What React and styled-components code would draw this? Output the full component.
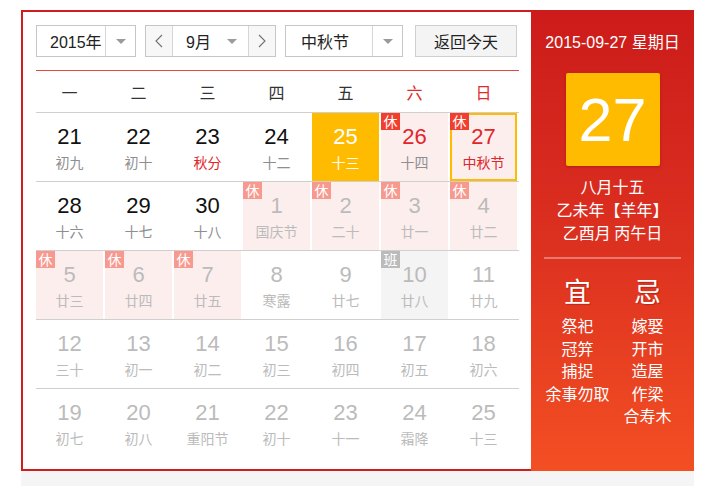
import React from "react";
import styled, { createGlobalStyle, css } from "styled-components";

const Global = createGlobalStyle`
  html, body { margin: 0; padding: 0; background: #fff; }
  body { font-family: "Liberation Sans", "Noto Sans CJK SC", sans-serif; }
  * { box-sizing: border-box; }
`;

const Page = styled.div`
  padding: 10px 0 0 21px;
`;

const Calendar = styled.div`
  display: flex;
  width: 673px;
`;

const Main = styled.div`
  width: 510px;
  border: 2px solid #cd1e1c;
  border-right: none;
  padding: 13px 12px 12px 13px;
`;

const Toolbar = styled.div`
  display: flex;
  align-items: center;
  height: 32px;
`;

const SelectBox = styled.div`
  display: flex;
  height: 32px;
  width: ${(p) => p.$w}px;
  margin-right: ${(p) => p.$mr || 0}px;
  border: 1px solid #c6c6c6;
  background: #fff;
  font-size: 16px;
  color: #222;
`;

const SelectText = styled.div`
  flex: 1;
  display: flex;
  align-items: center;
  padding-left: ${(p) => p.$pl || 13}px;
`;

const ArrowCell = styled.div`
  width: 30px;
  display: flex;
  align-items: center;
  justify-content: center;
  ${(p) => p.$divider && css`border-left: 1px solid #d6d6d6;`}
`;

const Caret = styled.span`
  width: 0;
  height: 0;
  border-left: 5px solid transparent;
  border-right: 5px solid transparent;
  border-top: 5px solid #9a9a9a;
`;

const MonthGroup = styled.div`
  display: flex;
  height: 32px;
  width: 131px;
  margin-right: 9px;
  border: 1px solid #c6c6c6;
`;

const NavBtn = styled.div`
  width: 27px;
  display: flex;
  align-items: center;
  justify-content: center;
  background: #f7f7f7;
  ${(p) => p.$left && css`border-right: 1px solid #d6d6d6;`}
  ${(p) => p.$right && css`border-left: 1px solid #d6d6d6;`}
`;

const MonthSelect = styled.div`
  flex: 1;
  display: flex;
  align-items: center;
  justify-content: space-between;
  padding: 0 11px 0 13px;
  background: #fff;
  font-size: 16px;
  color: #222;
`;

const TodayBtn = styled.div`
  width: 102px;
  height: 32px;
  margin-left: 3px;
  border: 1px solid #cfcfcf;
  background: #f4f4f4;
  display: flex;
  align-items: center;
  justify-content: center;
  font-size: 16px;
  color: #222;
`;

const RedLine = styled.div`
  height: 1px;
  margin-top: 13px;
  background: #e5483c;
`;

const WeekHead = styled.div`
  display: grid;
  grid-template-columns: repeat(7, 69px);
  height: 41px;
  align-items: center;
`;

const WeekName = styled.div`
  text-align: center;
  padding-right: 2px;
  font-size: 16px;
  color: ${(p) => (p.$red ? "#e02b2b" : "#333")};
`;

const Week = styled.div`
  display: grid;
  grid-template-columns: repeat(7, 69px);
  height: 69px;
  border-top: 1px solid #cfcfcf;
`;

const Cell = styled.div`
  position: relative;
  width: 67px;
  height: 68px;
  padding-top: 12px;
  text-align: center;
  background: ${(p) =>
    p.$today ? "#ffbb00" : p.$rest ? "#fdeeee" : p.$work ? "#f4f4f4" : "transparent"};
  ${(p) => p.$selected && css`box-shadow: inset 0 0 0 2px #ffbb00;`}
`;

const DayNum = styled.div`
  font-family: "Liberation Sans", Arial, sans-serif;
  font-size: 22px;
  line-height: 24px;
  color: ${(p) => p.$color};
`;

const Lunar = styled.div`
  margin-top: 3px;
  font-size: 14px;
  line-height: 20px;
  font-family: "Noto Sans CJK SC", sans-serif;
  color: ${(p) => p.$color};
`;

const Tag = styled.span`
  position: absolute;
  top: 0;
  left: 0;
  width: 19px;
  height: 17px;
  line-height: 17px;
  text-align: center;
  font-size: 14px;
  font-family: "Noto Sans CJK SC", sans-serif;
  color: #fff;
  background: ${(p) => p.$bg};
`;

const Side = styled.div`
  width: 163px;
  background: linear-gradient(180deg, #cc1b1a 0%, #dc3020 50%, #f34f23 100%);
  color: #fff;
  text-align: center;
  padding-top: 22px;
  display: flex;
  flex-direction: column;
  align-items: center;
`;

const SideDate = styled.div`
  font-size: 16px;
  line-height: 22px;
`;

const BigDay = styled.div`
  margin-top: 19px;
  width: 94px;
  height: 93px;
  border-radius: 2px;
  background: #ffbb00;
  box-shadow: 0 1px 3px rgba(120, 0, 0, 0.35);
  display: flex;
  align-items: center;
  justify-content: center;
  font-family: "Liberation Sans", Arial, sans-serif;
  font-size: 61px;
  color: #fff;
`;

const LunarInfo = styled.div`
  margin-top: 9px;
  font-size: 16px;
  line-height: 23px;
  font-family: "Noto Sans CJK SC", sans-serif;
`;

const SideLine = styled.div`
  margin-top: 13px;
  width: 137px;
  height: 2px;
  background: rgba(255, 255, 255, 0.35);
`;

const Advice = styled.div`
  margin-top: 16px;
  display: flex;
  justify-content: center;
`;

const AdviceCol = styled.div`
  width: 70px;
  display: flex;
  flex-direction: column;
  align-items: center;
  font-family: "Noto Sans CJK SC", sans-serif;
`;

const AdviceHead = styled.div`
  font-size: 27px;
  line-height: 32px;
  margin-bottom: 7px;
  text-shadow: 1px 1px 1px rgba(110, 0, 0, 0.35);
`;

const AdviceItem = styled.div`
  font-size: 16px;
  line-height: 22.5px;
  white-space: nowrap;
`;

const Below = styled.div`
  width: 673px;
  height: 20px;
  background: #f5f5f5;
`;

const Chevron = ({ dir }) => (
  <svg width="8" height="14" viewBox="0 0 8 14">
    <polyline
      points={dir === "left" ? "7,1 1,7 7,13" : "1,1 7,7 1,13"}
      fill="none"
      stroke="#707070"
      strokeWidth="1.1"
    />
  </svg>
);

const weekNames = ["一", "二", "三", "四", "五", "六", "日"];

// f: faded (other month); r: rest day; w: work day; t: today; s: selected; rn: red number; rl: red lunar
const weeks = [
  [
    { d: 21, l: "初九" },
    { d: 22, l: "初十" },
    { d: 23, l: "秋分", rl: 1 },
    { d: 24, l: "十二" },
    { d: 25, l: "十三", t: 1 },
    { d: 26, l: "十四", r: 1, rn: 1 },
    { d: 27, l: "中秋节", r: 1, s: 1, rn: 1, rl: 1 },
  ],
  [
    { d: 28, l: "十六" },
    { d: 29, l: "十七" },
    { d: 30, l: "十八" },
    { d: 1, l: "国庆节", f: 1, r: 1 },
    { d: 2, l: "二十", f: 1, r: 1 },
    { d: 3, l: "廿一", f: 1, r: 1 },
    { d: 4, l: "廿二", f: 1, r: 1 },
  ],
  [
    { d: 5, l: "廿三", f: 1, r: 1 },
    { d: 6, l: "廿四", f: 1, r: 1 },
    { d: 7, l: "廿五", f: 1, r: 1 },
    { d: 8, l: "寒露", f: 1 },
    { d: 9, l: "廿七", f: 1 },
    { d: 10, l: "廿八", f: 1, w: 1 },
    { d: 11, l: "廿九", f: 1 },
  ],
  [
    { d: 12, l: "三十", f: 1 },
    { d: 13, l: "初一", f: 1 },
    { d: 14, l: "初二", f: 1 },
    { d: 15, l: "初三", f: 1 },
    { d: 16, l: "初四", f: 1 },
    { d: 17, l: "初五", f: 1 },
    { d: 18, l: "初六", f: 1 },
  ],
  [
    { d: 19, l: "初七", f: 1 },
    { d: 20, l: "初八", f: 1 },
    { d: 21, l: "重阳节", f: 1 },
    { d: 22, l: "初十", f: 1 },
    { d: 23, l: "十一", f: 1 },
    { d: 24, l: "霜降", f: 1 },
    { d: 25, l: "十三", f: 1 },
  ],
];

const yi = ["祭祀", "冠笄", "捕捉", "余事勿取"];
const ji = ["嫁娶", "开市", "造屋", "作梁", "合寿木"];

function DayCell({ c }) {
  const numColor = c.t ? "#fff" : c.f ? "#bbbbbb" : c.rn ? "#e0262b" : "#111";
  const lunarColor = c.t ? "#fff" : c.f ? "#bbbbbb" : c.rl ? "#e0262b" : "#8e8e8e";
  return (
    <Cell $today={c.t} $rest={c.r} $work={c.w} $selected={c.s}>
      {c.r && <Tag $bg={c.f ? "#f8998f" : "#f23e2e"}>休</Tag>}
      {c.w && <Tag $bg="#bbbbbb">班</Tag>}
      <DayNum $color={numColor}>{c.d}</DayNum>
      <Lunar $color={lunarColor}>{c.l}</Lunar>
    </Cell>
  );
}

export default function App() {
  return (
    <>
      <Global />
      <Page>
        <Calendar>
          <Main>
            <Toolbar>
              <SelectBox $w={100} $mr={9}>
                <SelectText>2015年</SelectText>
                <ArrowCell $divider>
                  <Caret />
                </ArrowCell>
              </SelectBox>
              <MonthGroup>
                <NavBtn $left>
                  <Chevron dir="left" />
                </NavBtn>
                <MonthSelect>
                  <span>9月</span>
                  <Caret />
                </MonthSelect>
                <NavBtn $right>
                  <Chevron dir="right" />
                </NavBtn>
              </MonthGroup>
              <SelectBox $w={118} $mr={9}>
                <SelectText $pl={15}>中秋节</SelectText>
                <ArrowCell $divider>
                  <Caret />
                </ArrowCell>
              </SelectBox>
              <TodayBtn>返回今天</TodayBtn>
            </Toolbar>
            <RedLine />
            <WeekHead>
              {weekNames.map((n, i) => (
                <WeekName key={n} $red={i >= 5}>
                  {n}
                </WeekName>
              ))}
            </WeekHead>
            {weeks.map((w, i) => (
              <Week key={i}>
                {w.map((c, j) => (
                  <DayCell key={j} c={c} />
                ))}
              </Week>
            ))}
          </Main>
          <Side>
            <SideDate>2015-09-27 星期日</SideDate>
            <BigDay>27</BigDay>
            <LunarInfo>
              <div>八月十五</div>
              <div>乙未年【羊年】</div>
              <div>乙酉月 丙午日</div>
            </LunarInfo>
            <SideLine />
            <Advice>
              <AdviceCol>
                <AdviceHead>宜</AdviceHead>
                {yi.map((t) => (
                  <AdviceItem key={t}>{t}</AdviceItem>
                ))}
              </AdviceCol>
              <AdviceCol>
                <AdviceHead>忌</AdviceHead>
                {ji.map((t) => (
                  <AdviceItem key={t}>{t}</AdviceItem>
                ))}
              </AdviceCol>
            </Advice>
          </Side>
        </Calendar>
        <Below />
      </Page>
    </>
  );
}
